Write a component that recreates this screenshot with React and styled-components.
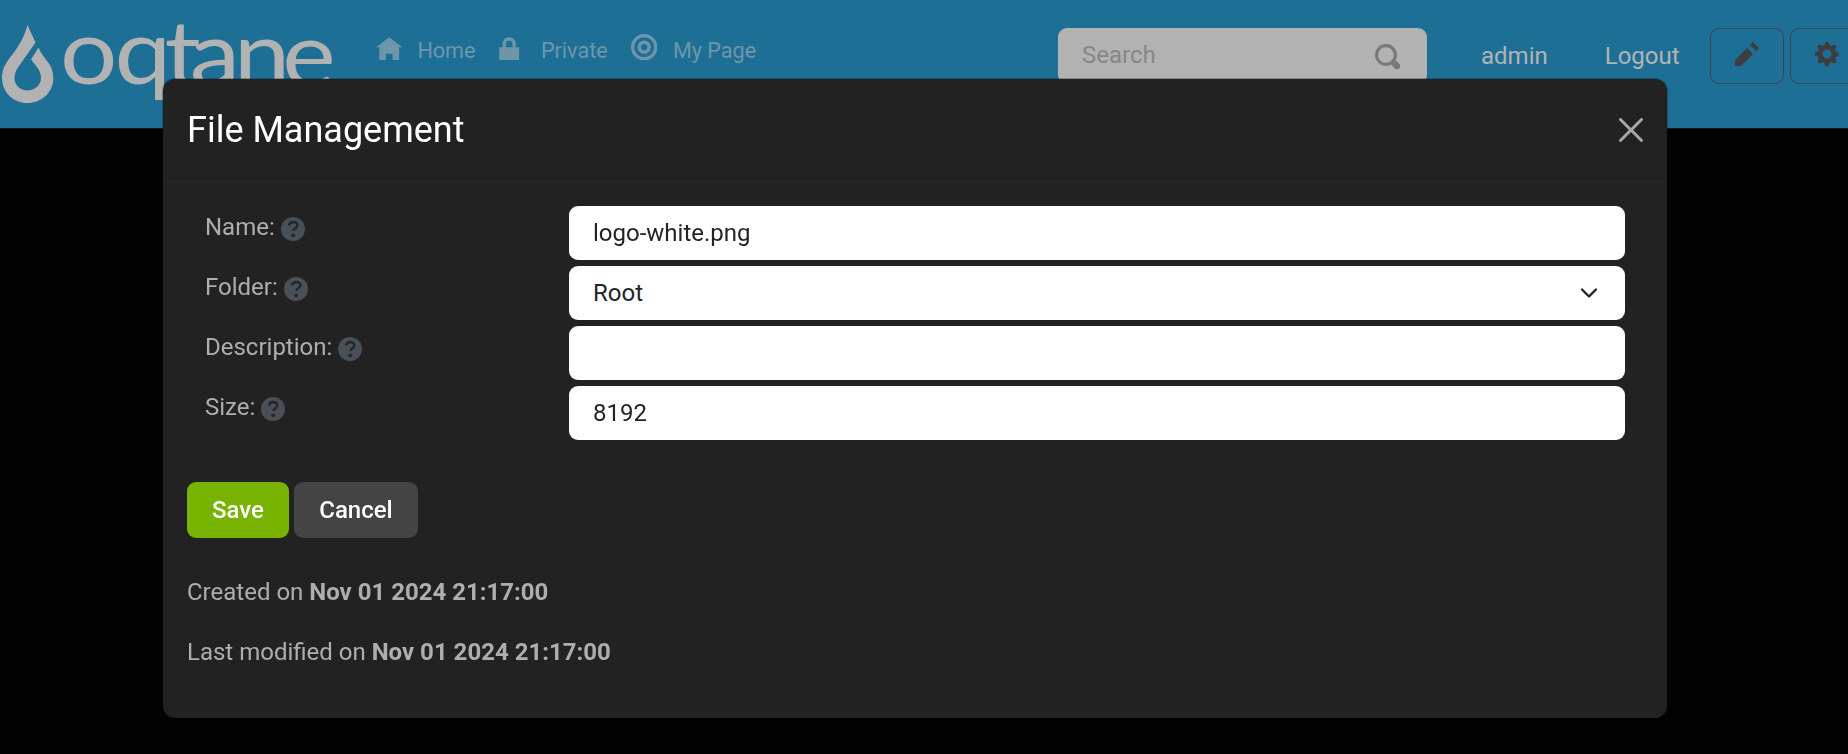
import React from "react";
import styled, { createGlobalStyle } from "styled-components";

const GlobalStyle = createGlobalStyle`
  *, *::before, *::after { box-sizing: border-box; }
  html, body { margin: 0; height: 100%; overflow: hidden; background: #020202; }
  body {
    font-family: Roboto, "Liberation Sans", sans-serif;
    font-size: 24px;
    line-height: 36px;
    color: #adafae;
  }
`;

const Page = styled.div`
  height: 754px;
  overflow: hidden;
`;

const Navbar = styled.header`
  display: flex;
  align-items: flex-start;
  width: 1900px;
  height: 129px;
  background: #1e6f96;
  border-bottom: 1px solid #1b1b1b;
`;

const Brand = styled.a`
  display: block;
  width: 360px;
  height: 128px;
  color: #b2b2b2;
  svg { display: block; }
`;

const Nav = styled.nav`
  display: flex;
  flex: none;
  width: 698px;
  padding: 33px 0 0 16px;
`;

const NavItem = styled.a`
  display: flex;
  flex: none;
  width: ${(p) => p.$width}px;
  font-size: 21.6px;
  color: #6d97a9;
  svg { margin: 1px ${(p) => p.$gap}px 0 0; }
`;

const Icon = styled.svg`
  display: block;
  flex: none;
  width: ${(p) => p.$size}px;
  height: ${(p) => p.$size}px;
  fill: currentColor;
`;

const SearchBox = styled.div`
  display: flex;
  justify-content: space-between;
  width: 369px;
  height: 56px;
  margin-top: 28px;
  padding: 9px 27px 0 24px;
  border-radius: 9px;
  background: #b2b2b2;
  color: #858787;
  svg { margin-top: 7px; color: #777a7a; }
`;

const UserLinks = styled.div`
  display: flex;
  width: 283px;
  padding: 38px 0 0 54px;
  gap: 57px;
  color: #b2b4b5;
`;

const Tools = styled.div`
  display: flex;
  gap: 6px;
  padding-top: 28px;
`;

const ToolButton = styled.button`
  display: flex;
  justify-content: center;
  width: 74px;
  height: 56px;
  padding: 13px 0 0;
  border: 1px solid #3f4346;
  border-radius: 9px;
  background: transparent;
  color: #3d3d3d;
`;

const Overlay = styled.div`
  position: fixed;
  inset: 0;
  padding: 79px 0 0 163px;
`;

const Modal = styled.section`
  width: 1504px;
  height: 639px;
  border-radius: 12px;
  background: #222;
  box-shadow: 0 0 0 1px rgba(0, 0, 0, 0.25);
`;

const ModalHeader = styled.div`
  display: flex;
  align-items: center;
  justify-content: space-between;
  height: 103px;
  padding: 0 24px;
  border-bottom: 1px solid #282828;
`;

const Title = styled.h5`
  margin: 0;
  font-size: 36px;
  line-height: 54px;
  font-weight: 400;
  color: #fff;
`;

const CloseButton = styled.button`
  display: flex;
  padding: 0;
  border: 0;
  background: none;
  color: #a7a7a7;
`;

const ModalBody = styled.div`
  padding: 24px 24px 0;
`;

const Form = styled.div`
  display: grid;
  gap: 6px;
  padding: 0 18px;
`;

const Row = styled.div`
  display: grid;
  grid-template-columns: 364px 1056px;
  height: 54px;
`;

const Label = styled.label`
  display: flex;
  gap: 6px;
  padding-top: 3px;
  svg { margin-top: 8px; }
`;

const Field = styled.div`
  display: flex;
  align-items: center;
  justify-content: space-between;
  padding: 0 24px;
  border-radius: 9px;
  background: #fff;
  color: #212529;
`;

const Actions = styled.div`
  display: flex;
  gap: 5px;
  margin: 42px 0 36px;
`;

const Button = styled.button`
  width: ${(p) => p.$width}px;
  height: 56px;
  padding: 0;
  border: 0;
  border-radius: 9px;
  background: ${(p) => (p.$primary ? "#77b300" : "#444")};
  color: #fff;
  font: 500 24px/36px Roboto, sans-serif;
`;

const Audit = styled.p`
  margin: 0 0 24px;
  b { font-weight: 700; }
`;

const paths = {
  home: "M4 1l-4 3h1v4h2v-2h2v2h2v-4.03l1 .03-4-3z",
  lock: "M4 1c-1.1 0-2 .9-2 2v1h-1v4h6v-4h-1v-1c0-1.1-.9-2-2-2zm0 1c.56 0 1 .44 1 1v1h-2v-1c0-.56.44-1 1-1z",
  target:
    "M4 0c-2.2 0-4 1.8-4 4s1.8 4 4 4 4-1.8 4-4-1.8-4-4-4zm0 1c1.66 0 3 1.34 3 3s-1.34 3-3 3-3-1.34-3-3 1.34-3 3-3zm0 1c-1.1 0-2 .9-2 2s.9 2 2 2 2-.9 2-2-.9-2-2-2zm0 1c.56 0 1 .44 1 1s-.44 1-1 1-1-.44-1-1 .44-1 1-1z",
  pencil: "M6 0l-1 1 2 2 1-1-2-2zm-2 2l-4 4v2h2l4-4-2-2z",
  cog: "M3.5 0l-.5 1.19c-.1.03-.19.08-.28.13l-1.19-.5-.72.72.5 1.19c-.05.1-.09.18-.13.28l-1.19.5v1l1.19.5c.04.1.08.18.13.28l-.5 1.19.72.72 1.19-.5c.09.04.18.09.28.13l.5 1.19h1l.5-1.19c.09-.04.19-.08.28-.13l1.19.5.72-.72-.5-1.19c.04-.09.09-.19.13-.28l1.19-.5v-1l-1.19-.5c-.03-.09-.08-.19-.13-.28l.5-1.19-.72-.72-1.19.5c-.09-.04-.19-.09-.28-.13l-.5-1.19h-1zm.5 2.500c.83 0 1.500.67 1.500 1.500s-.67 1.500-1.500 1.500-1.500-.67-1.500-1.500.67-1.500 1.500-1.500z",
  search:
    "M3.5 0c-1.93 0-3.5 1.57-3.5 3.5s1.57 3.5 3.5 3.5c.59 0 1.17-.14 1.66-.41a1 1 0 0 0 .13.13l1 1a1.02 1.02 0 1 0 1.44-1.44l-1-1a1 1 0 0 0-.16-.13c.27-.49.44-1.06.44-1.66 0-1.93-1.55-3.5-3.5-3.5zm0 1c1.39 0 2.5 1.11 2.5 2.5 0 .66-.24 1.27-.66 1.72l-.03.03a1 1 0 0 0-.13.13c-.44.4-1.04.63-1.69.63-1.39 0-2.5-1.11-2.5-2.5s1.11-2.5 2.5-2.5z",
};

const Glyph = ({ name, size = 24 }) => (
  <Icon $size={size} viewBox="0 0 8 8">
    <path d={paths[name]} />
  </Icon>
);

const Help = () => (
  <Icon $size={24} viewBox="0 0 24 24" color="#495057">
    <circle cx="12" cy="12" r="12" />
    <path d="M8 8.500C8.600 6 10.200 5 12.200 5c2.400 0 4.100 1.300 4.100 3.400 0 2.900-3.900 2.900-3.900 5.700" fill="none" stroke="#262728" strokeWidth="2.4" />
    <circle cx="12.2" cy="18.3" r="1.9" fill="#262728" />
  </Icon>
);

const Logo = () => (
  <svg width="360" height="128" viewBox="0 0 360 128" fill="currentColor">
    <path d="M27.500 25L35.500 42.500L19 66Q14.500 72 14.500 78C14.500 85.500 20.500 90.500 27.500 90.500S41 85.500 41 78C41 71 37 67 31 59.500L38.500 47.500C42 56 48 61 51 67Q53.300 72 53.300 78C53.300 92.500 41.500 103 27.500 103S2 92.500 2 78C2 70 5 64 9 59C14 52 23 42 27.500 25Z" />
    <text
      transform="scale(1.1 1)"
      x="54.5 104 149.5 172.500 212.500 256.500"
      y="83.500 83.500 86 86 86 87"
      fontFamily="Lato, sans-serif"
      fontSize="92"
    >
      oqtane
    </text>
  </svg>
);

const fields = [
  { label: "Name:", value: "logo-white.png" },
  { label: "Folder:", value: "Root", select: true },
  { label: "Description:", value: "" },
  { label: "Size:", value: "8192" },
];

export default function App() {
  return (
    <Page>
      <GlobalStyle />
      <Navbar>
        <Brand>
          <Logo />
        </Brand>
        <Nav>
          <NavItem $width={119.5} $gap={15}>
            <Glyph name="home" size={26.4} />
            Home
          </NavItem>
          <NavItem $width={135.5} $gap={19}>
            <Glyph name="lock" size={26.4} />
            Private
          </NavItem>
          <NavItem $width={140} $gap={15.5}>
            <Glyph name="target" size={26.4} />
            My Page
          </NavItem>
        </Nav>
        <SearchBox>
          <span>Search</span>
          <Glyph name="search" size={25} />
        </SearchBox>
        <UserLinks>
          <span>admin</span>
          <span>Logout</span>
        </UserLinks>
        <Tools>
          <ToolButton>
            <Glyph name="pencil" />
          </ToolButton>
          <ToolButton>
            <Glyph name="cog" />
          </ToolButton>
        </Tools>
      </Navbar>
      <Overlay>
        <Modal>
          <ModalHeader>
            <Title>File Management</Title>
            <CloseButton aria-label="Close">
              <Icon $size={24} viewBox="0 0 16 16">
                <path d="M.293.293a1 1 0 0 1 1.414 0L8 6.586 14.293.293a1 1 0 1 1 1.414 1.414L9.414 8l6.293 6.293a1 1 0 0 1-1.414 1.414L8 9.414l-6.293 6.293a1 1 0 0 1-1.414-1.414L6.586 8 .293 1.707a1 1 0 0 1 0-1.414z" />
              </Icon>
            </CloseButton>
          </ModalHeader>
          <ModalBody>
            <Form>
              {fields.map((f) => (
                <Row key={f.label}>
                  <Label>
                    {f.label}
                    <Help />
                  </Label>
                  <Field>
                    {f.value}
                    {f.select && (
                      <Icon $size={24} viewBox="0 0 24 24">
                        <path d="M5 8.500l7 7 7-7" fill="none" stroke="#212529" strokeWidth="2.3" strokeLinecap="round" strokeLinejoin="round" />
                      </Icon>
                    )}
                  </Field>
                </Row>
              ))}
            </Form>
            <Actions>
              <Button $primary $width={102}>Save</Button>
              <Button $width={124}>Cancel</Button>
            </Actions>
            <Audit>
              Created on <b>Nov 01 2024 21:17:00</b>
            </Audit>
            <Audit>
              Last modified on <b>Nov 01 2024 21:17:00</b>
            </Audit>
          </ModalBody>
        </Modal>
      </Overlay>
    </Page>
  );
}
